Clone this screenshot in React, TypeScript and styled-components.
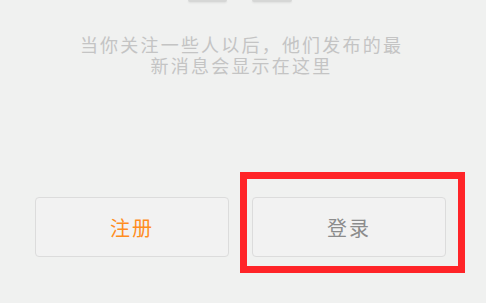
import React from "react";
import styled, { createGlobalStyle } from "styled-components";

const Global = createGlobalStyle`
  html, body {
    margin: 0;
    padding: 0;
    background: #f0f1f0;
  }
  body {
    font-family: "Noto Sans CJK SC", "Noto Sans", sans-serif;
  }
`;

const Page = styled.div`
  width: 486px;
  height: 303px;
  background: #f0f1f0;
  display: flex;
  flex-direction: column;
  overflow: hidden;
`;

const StubRow = styled.div`
  display: flex;
  justify-content: center;
  gap: 25px;
  padding-right: 6px;
  height: 3px;
`;

const Stub = styled.div<{ $w: number }>`
  width: ${(p) => p.$w}px;
  height: 2px;
  background: #d6d7d6;
  border-radius: 0 0 3px 3px;
  box-shadow: 0 1px 2px rgba(0, 0, 0, 0.08);
`;

const Message = styled.p`
  margin: 31px 0 0;
  padding-right: 3px;
  text-align: center;
  font-size: 18px;
  line-height: 21px;
  letter-spacing: 2.2px;
  color: #c4c4c4;
`;

const ButtonRow = styled.div`
  display: flex;
  gap: 23px;
  padding: 0 40px 0 35px;
  margin-top: 121px;
`;

const Slot = styled.div`
  position: relative;
  flex: 1;
  display: flex;
`;

const Button = styled.button<{ $tone: "accent" | "plain" }>`
  flex: 1;
  height: 60px;
  box-sizing: border-box;
  border: 1px solid #dcdcdc;
  border-radius: 4px;
  background: #f2f2f2;
  font-family: "Noto Sans CJK SC", "Noto Sans", sans-serif;
  font-size: 20px;
  letter-spacing: 2px;
  padding: 0;
  color: ${(p) => (p.$tone === "accent" ? "#ff8d1f" : "#8c8c8c")};
`;

const Highlight = styled.div`
  position: absolute;
  left: -12px;
  right: -19px;
  top: -25px;
  bottom: -16px;
  border: 7px solid #ff2428;
  pointer-events: none;
`;

export default function App() {
  return (
    <>
      <Global />
      <Page>
        <StubRow>
          <Stub $w={39} />
          <Stub $w={40} />
        </StubRow>
        <Message>
          当你关注一些人以后，他们发布的最
          <br />
          新消息会显示在这里
        </Message>
        <ButtonRow>
          <Slot>
            <Button $tone="accent">注册</Button>
          </Slot>
          <Slot>
            <Button $tone="plain">登录</Button>
            <Highlight />
          </Slot>
        </ButtonRow>
      </Page>
    </>
  );
}
